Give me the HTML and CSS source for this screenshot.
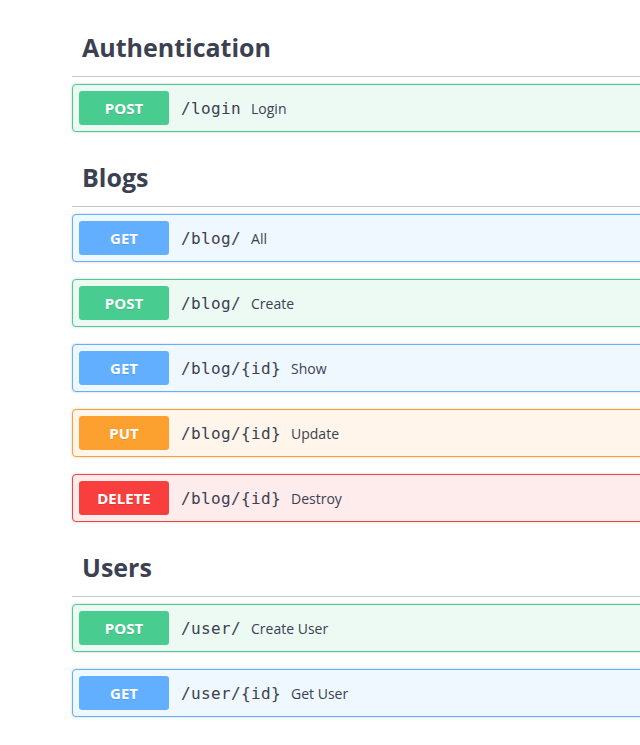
FILE: index.html
```html
<!DOCTYPE html>
<html lang="en">
<head>
<meta charset="utf-8">
<title>API</title>
<link rel="stylesheet" href="styles.css">
</head>
<body>
<div class="wrapper">
  <section class="tag-section">
    <h3 class="tag">Authentication</h3>
    <div class="ops">
      <div class="op op-post"><span class="method">POST</span><span class="path">/login</span><span class="desc">Login</span></div>
    </div>
  </section>
  <section class="tag-section">
    <h3 class="tag">Blogs</h3>
    <div class="ops">
      <div class="op op-get"><span class="method">GET</span><span class="path">/blog/</span><span class="desc">All</span></div>
      <div class="op op-post"><span class="method">POST</span><span class="path">/blog/</span><span class="desc">Create</span></div>
      <div class="op op-get"><span class="method">GET</span><span class="path">/blog/{id}</span><span class="desc">Show</span></div>
      <div class="op op-put"><span class="method">PUT</span><span class="path">/blog/{id}</span><span class="desc">Update</span></div>
      <div class="op op-delete"><span class="method">DELETE</span><span class="path">/blog/{id}</span><span class="desc">Destroy</span></div>
    </div>
  </section>
  <section class="tag-section">
    <h3 class="tag">Users</h3>
    <div class="ops">
      <div class="op op-post"><span class="method">POST</span><span class="path">/user/</span><span class="desc">Create User</span></div>
      <div class="op op-get"><span class="method">GET</span><span class="path">/user/{id}</span><span class="desc">Get User</span></div>
    </div>
  </section>
</div>
</body>
</html>
```

FILE: styles.css
```css
html, body {
  margin: 0;
  padding: 0;
  overflow: hidden;
  background: #ffffff;
}
body {
  font-family: "Open Sans", "Noto Sans", sans-serif;
  color: #3b4151;
}
.wrapper {
  width: 700px;
  padding: 19px 0 0 72px;
}
.tag-section {
  display: flex;
  flex-direction: column;
}
.tag {
  margin: 0 0 7px;
  padding: 10px 20px 10px 10px;
  font-size: 25px;
  line-height: 37px;
  font-weight: 700;
  color: #3b4151;
  border-bottom: 1px solid #c4c6cb;
}
.ops {
  display: flex;
  flex-direction: column;
}
.op {
  display: flex;
  align-items: center;
  height: 46px;
  padding: 0 6px;
  margin-bottom: 17px;
  border: 1px solid;
  border-radius: 4px;
  box-shadow: 0 0 3px rgba(0, 0, 0, 0.19);
}
.method {
  width: 90px;
  height: 34px;
  display: flex;
  align-items: center;
  justify-content: center;
  border-radius: 3px;
  color: #ffffff;
  font-size: 15px;
  font-weight: 700;
  text-shadow: 0 1px 0 rgba(0, 0, 0, 0.1);
}
.path {
  padding: 0 10px 0 12px;
  font-family: "DejaVu Sans Mono", monospace;
  font-size: 16px;
  letter-spacing: 0.37px;
  color: #3b4151;
}
.desc {
  font-size: 14px;
  color: #3b4151;
}
.op-post { background: #edfaf4; border-color: #49cc90; }
.op-post .method { background: #49cc90; }
.op-get { background: #eff7ff; border-color: #61affe; }
.op-get .method { background: #61affe; }
.op-put { background: #fff5ea; border-color: #fca130; }
.op-put .method { background: #fca130; }
.op-delete { background: #feebeb; border-color: #f93e3e; }
.op-delete .method { background: #f93e3e; }
```
